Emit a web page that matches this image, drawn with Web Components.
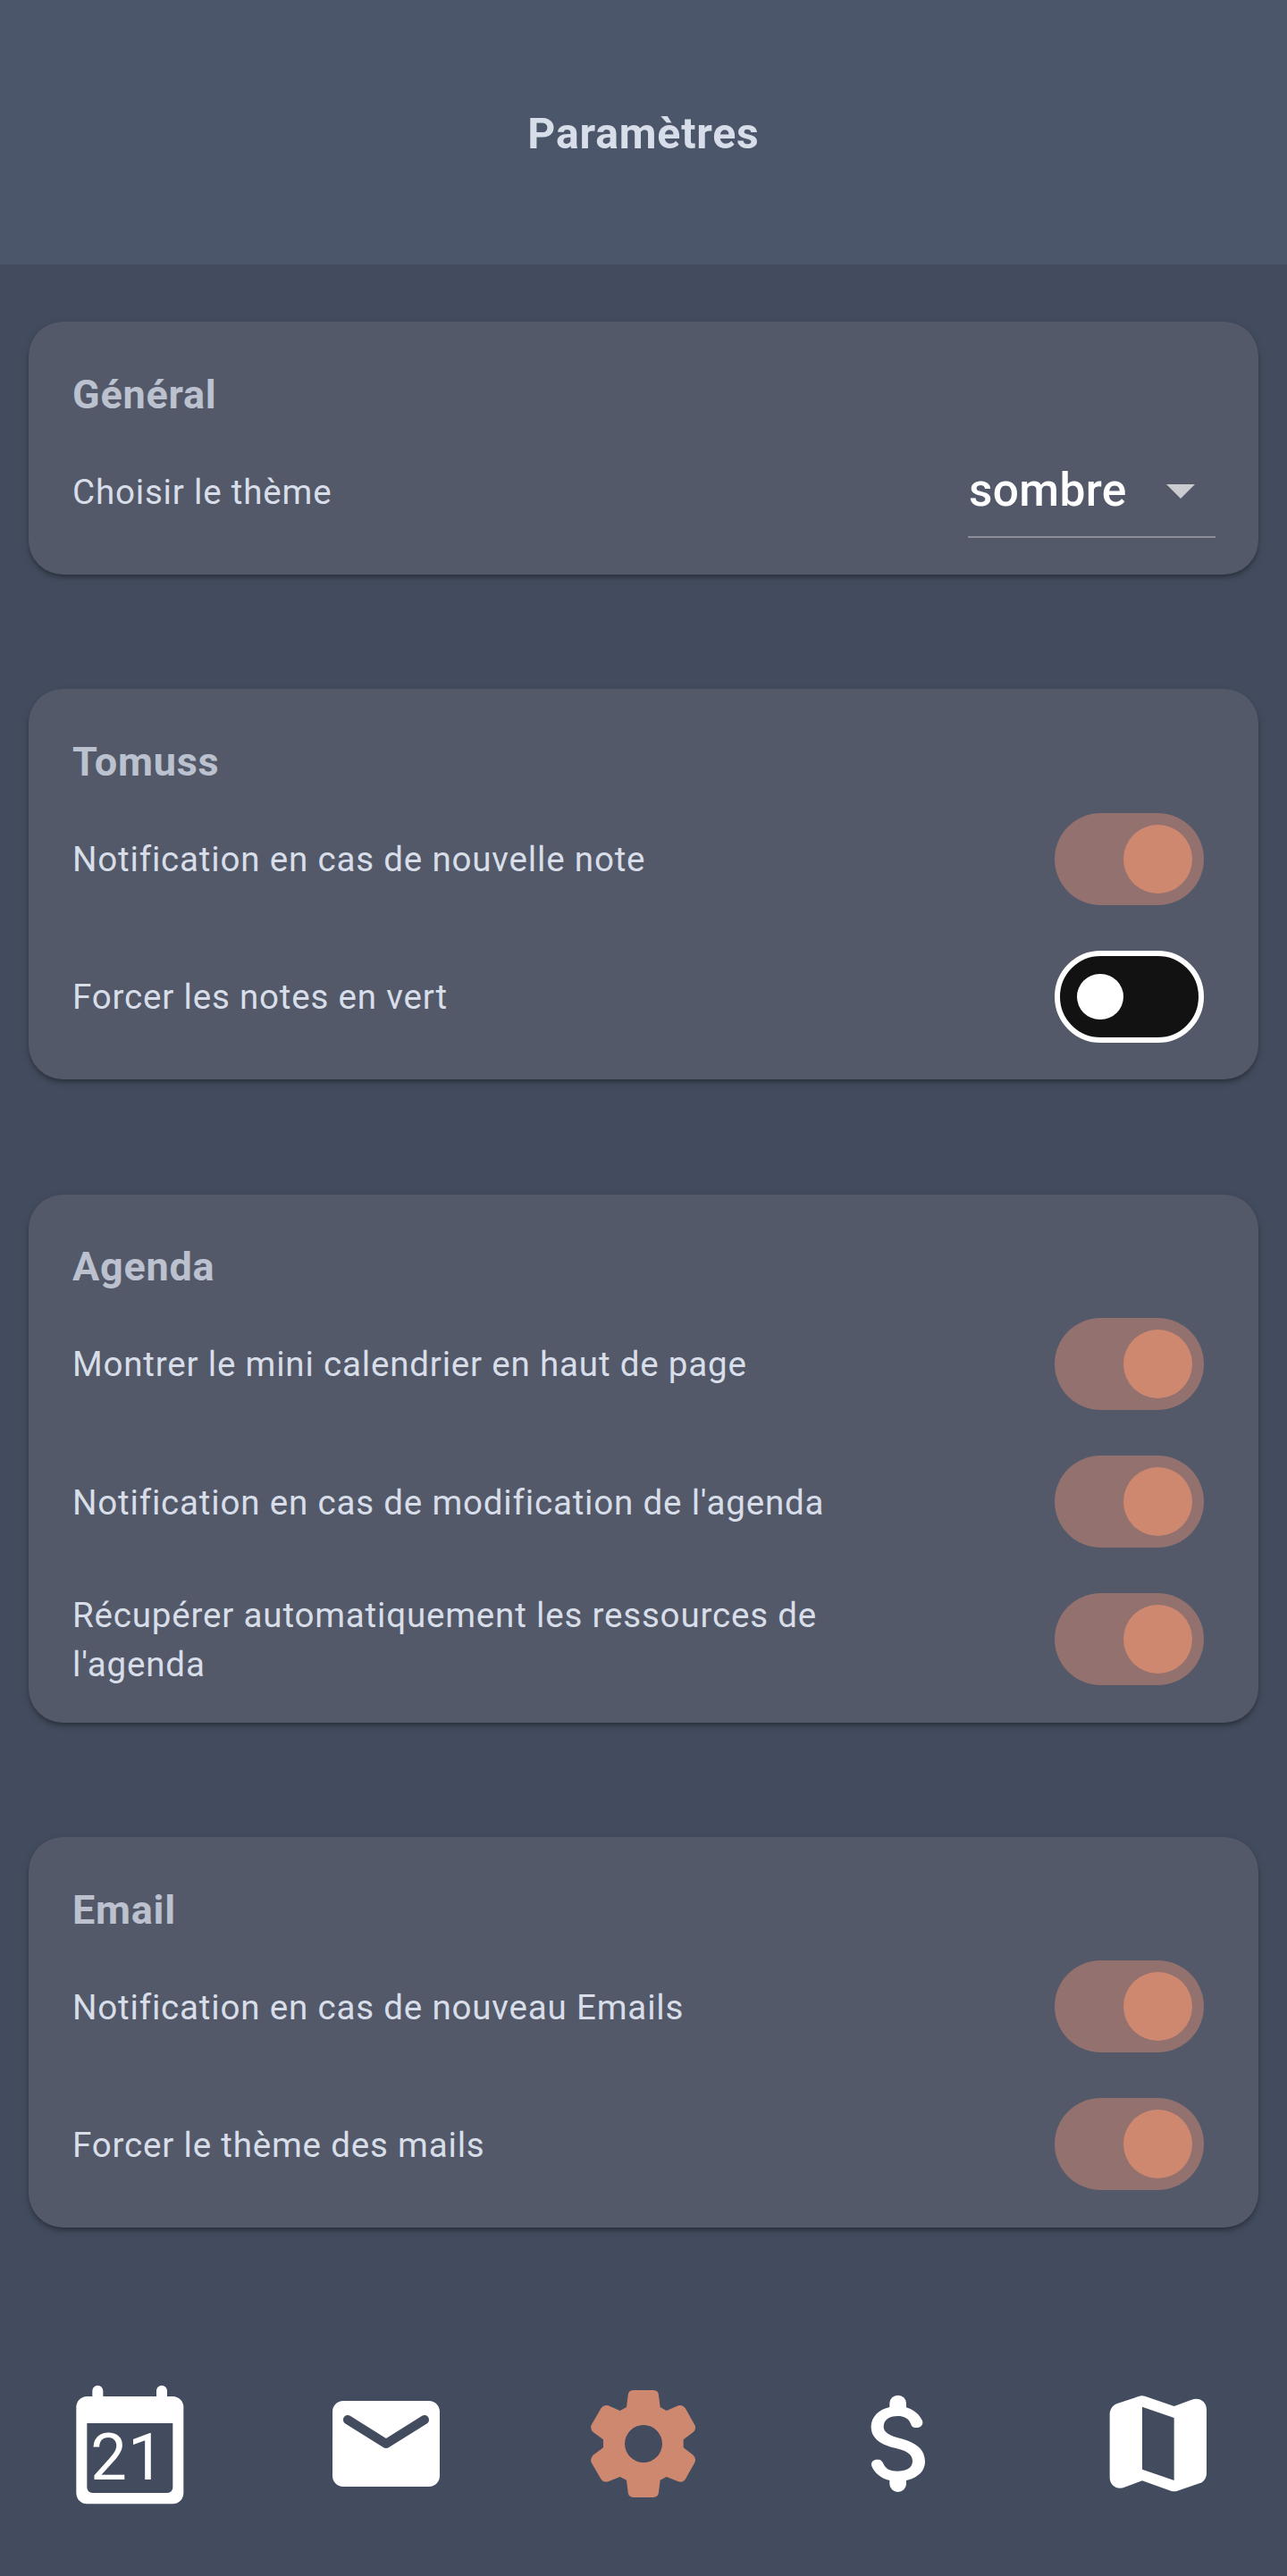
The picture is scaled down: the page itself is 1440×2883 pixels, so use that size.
<!DOCTYPE html>
<html lang="fr">
<head>
<meta charset="utf-8">
<title>Paramètres</title>
<style>
html,body{margin:0;padding:0;background:#434c5e}
body{font-family:Roboto,"Liberation Sans",sans-serif;color:#d8dee9}
</style>
</head>
<body>
<settings-page>
  <app-header slot="header">Paramètres</app-header>
  <settings-card heading="Général">
    <setting-row>Choisir le thème<theme-select slot="control">sombre</theme-select></setting-row>
  </settings-card>
  <settings-card heading="Tomuss">
    <setting-row>Notification en cas de nouvelle note<toggle-switch slot="control" on></toggle-switch></setting-row>
    <setting-row>Forcer les notes en vert<toggle-switch slot="control"></toggle-switch></setting-row>
  </settings-card>
  <settings-card heading="Agenda">
    <setting-row>Montrer le mini calendrier en haut de page<toggle-switch slot="control" on></toggle-switch></setting-row>
    <setting-row>Notification en cas de modification de l'agenda<toggle-switch slot="control" on></toggle-switch></setting-row>
    <setting-row>Récupérer automatiquement les ressources de l'agenda<toggle-switch slot="control" on></toggle-switch></setting-row>
  </settings-card>
  <settings-card heading="Email">
    <setting-row>Notification en cas de nouveau Emails<toggle-switch slot="control" on></toggle-switch></setting-row>
    <setting-row>Forcer le thème des mails<toggle-switch slot="control" on></toggle-switch></setting-row>
  </settings-card>
  <bottom-nav slot="nav"></bottom-nav>
</settings-page>
<script>
const define = (name, html, setup) => customElements.define(name, class extends HTMLElement {
  constructor() {
    super();
    this.attachShadow({ mode: 'open' }).innerHTML = html;
  }
  connectedCallback() { if (setup) setup(this, this.shadowRoot); }
});

define('settings-page', `
<style>
:host{display:flex;flex-direction:column;width:1440px;height:2883px;background:#434c5e;overflow:hidden}
main{flex:1;display:flex;flex-direction:column;gap:128.3px;padding:64.3px 32px 0}
</style>
<slot name="header"></slot><main><slot></slot></main><slot name="nav"></slot>`);

define('app-header', `
<style>
:host{display:flex;align-items:center;justify-content:center;height:296px;box-sizing:border-box;padding-top:3px;background:#4c566a}
h1{margin:0;font-size:48.2px;font-weight:700;letter-spacing:.8px;line-height:60px}
</style>
<h1><slot></slot></h1>`);

define('settings-card', `
<style>
:host{display:block;box-sizing:border-box;padding:50.6px 48px 16px 49px;border-radius:38.5px;background:#535968;
box-shadow:0 5px 5px -2px rgba(0,0,0,.17),0 3px 4px rgba(0,0,0,.12),0 3px 10px rgba(0,0,0,.13)}
h2{margin:0;font-size:45px;font-weight:700;letter-spacing:.75px;line-height:62px;color:#bbc1ce}
</style>
<h2></h2><slot></slot>`, (el, root) => { root.querySelector('h2').textContent = el.getAttribute('heading'); });

define('setting-row', `
<style>
:host{display:flex;align-items:center;justify-content:space-between;height:154.2px}
div{width:880px;padding-top:1px;font-size:38.57px;line-height:55px;letter-spacing:.8px}
</style>
<div><slot></slot></div><slot name="control"></slot>`);

define('toggle-switch', `
<style>
:host{display:flex;align-items:center;justify-content:flex-start;box-sizing:border-box;width:167px;height:103px;
margin:0 13px 0 0;border-radius:52px;border:6.4px solid #fff;background:#121212;padding-left:19px}
i{width:51.5px;height:51.5px;border-radius:50%;background:#fff}
:host([on]){border:0;background:#92716f;justify-content:flex-end;padding:0 13px 0 0}
:host([on]) i{width:77px;height:77px;background:#cf8870}
</style><i></i>`);

define('theme-select', `
<style>
:host{display:flex;align-items:center;justify-content:space-between;box-sizing:border-box;width:277px;height:104px;
padding:0 23px 0 1px;border-bottom:2px solid #8c8f9a;font-size:51.4px;font-weight:500;letter-spacing:.35px;line-height:60px;color:#fff}
svg{display:block;width:32px;height:16px;margin-top:2px}
</style>
<span><slot></slot></span><svg viewBox="0 0 32 16"><path fill="#cbccd1" d="M0 0h32L16 16z"/></svg>`);

define('bottom-nav', `
<style>
:host{display:grid;grid-template-columns:repeat(5,288px);justify-items:center;align-items:center;height:296px}
svg{display:block;width:144px;height:144px;fill:#fff}
.active{fill:#cf8870}
text{font-family:Roboto,sans-serif;font-size:217px;letter-spacing:3px}
</style>
<svg viewBox="96 69 432 432">
  <path fill-rule="evenodd" d="M190 126V107a18 18 0 0 1 36 0V126H405V107a18 18 0 0 1 36 0V126H460a36 36 0 0 1 36 36V451a36 36 0 0 1-36 36H172a36 36 0 0 1-36-36V162a36 36 0 0 1 36-36zM172 216V432a18 18 0 0 0 18 18H442a18 18 0 0 0 18-18V216z"/>
  <text x="184" y="405">21</text>
</svg>
<svg viewBox="0 0 24 24"><path d="M20 4H4c-1.1 0-1.99.9-1.99 2L2 18c0 1.1.9 2 2 2h16c1.1 0 2-.9 2-2V6c0-1.1-.9-2-2-2zm-.4 4.25l-7.07 4.42c-.32.2-.74.2-1.06 0L4.4 8.25c-.25-.16-.4-.43-.4-.72 0-.67.73-1.07 1.3-.72L12 11l6.7-4.19c.57-.35 1.3.05 1.3.72 0 .29-.15.56-.4.72z"/></svg>
<svg class="active" viewBox="84 69 432 432"><path fill-rule="evenodd" d="M266 105H333Q350 106 351 122L356 162L377 174L417 157Q431 153 440 165L472 222Q478 235 467 246L434 271V298L467 323Q478 334 472 348L440 405Q431 417 417 412L377 396L356 407L351 448Q350 464 333 465H266Q249 464 248 448L243 407L221 396L182 412Q167 417 158 405L125 348Q120 334 131 323L165 298V271L131 246Q120 235 125 222L158 165Q167 153 182 157L221 174L243 162L248 122Q249 106 266 105ZM300 222a63 63 0 1 0 0 126a63 63 0 1 0 0-126z"/></svg>
<svg viewBox="948 69 432 432"><path d="M1126 162V149a28 27 0 0 1 56 0V163C1207 170 1227 186 1236 208C1240 220 1231 231 1219 231H1213C1204 231 1199 225 1196 216C1190 201 1175 192 1154 192C1123 192 1106 206 1106 228C1106 247 1125 258 1165 268C1208 279 1245 300 1245 345C1245 377 1220 400 1182 408V420a28 27 0 0 1-56 0V408C1097 401 1076 384 1066 360C1062 348 1071 338 1083 338H1089C1097 338 1102 344 1106 353C1112 368 1127 377 1154 377C1188 377 1203 361 1203 344C1203 324 1188 309 1147 300C1097 289 1064 267 1064 228C1064 194 1092 169 1126 162Z"/></svg>
<svg viewBox="72 69 432 432"><path fill-rule="evenodd" d="M222 126Q233 122 245 126L341 159L400 137C425 127 450 143 450 170V383C450 400 441 413 426 418L352 443Q341 446 330 443L234 409L172 432C149 440 125 424 125 398V186C125 170 134 156 150 150ZM234 161V371L341 408V198Z"/></svg>`);
</script>
</body>
</html>
